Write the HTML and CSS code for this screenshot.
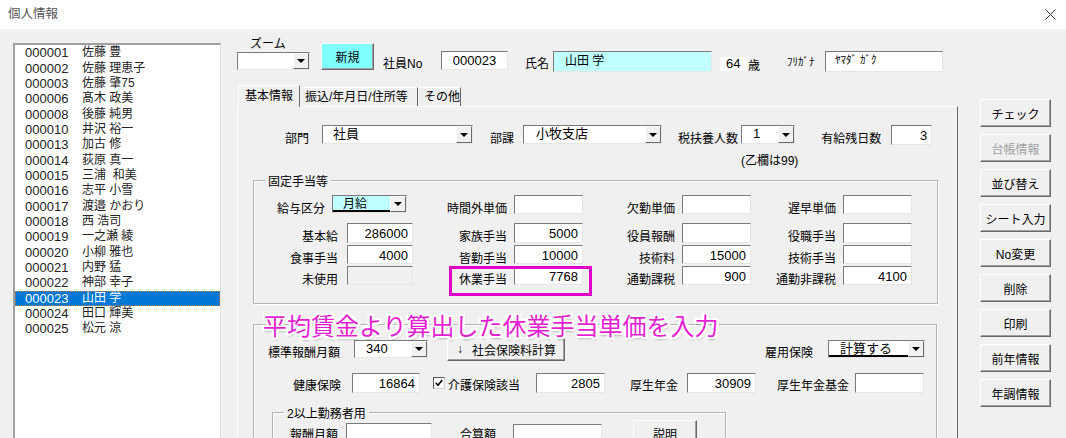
FILE: index.html
```html
<!DOCTYPE html>
<html lang="ja">
<head>
<meta charset="utf-8">
<title>個人情報</title>
<link rel="stylesheet" href="styles.css">
</head>
<body>
<div class="window">
  <div class="titlebar">
    <span class="title">個人情報</span>
    <svg class="close" width="11" height="11" viewBox="0 0 11 11"><path d="M0.5 0.5 L10.5 10.5 M10.5 0.5 L0.5 10.5" stroke="#333" stroke-width="1" fill="none"/></svg>
  </div>
  <div class="client">
    <ul class="list">
      <li><span class="code">000001</span><span class="nm">佐藤 豊</span></li>
      <li><span class="code">000002</span><span class="nm">佐藤 理恵子</span></li>
      <li><span class="code">000003</span><span class="nm">佐藤 肇75</span></li>
      <li><span class="code">000006</span><span class="nm">髙木 政美</span></li>
      <li><span class="code">000008</span><span class="nm">後藤 純男</span></li>
      <li><span class="code">000010</span><span class="nm">井沢 裕一</span></li>
      <li><span class="code">000013</span><span class="nm">加古 修</span></li>
      <li><span class="code">000014</span><span class="nm">荻原 真一</span></li>
      <li><span class="code">000015</span><span class="nm">三浦&nbsp; 和美</span></li>
      <li><span class="code">000016</span><span class="nm">志平 小雪</span></li>
      <li><span class="code">000017</span><span class="nm">渡邉 かおり</span></li>
      <li><span class="code">000018</span><span class="nm">西 浩司</span></li>
      <li><span class="code">000019</span><span class="nm">一之瀬 綾</span></li>
      <li><span class="code">000020</span><span class="nm">小柳 雅也</span></li>
      <li><span class="code">000021</span><span class="nm">内野 猛</span></li>
      <li><span class="code">000022</span><span class="nm">神部 幸子</span></li>
      <li class="sel"><span class="code">000023</span><span class="nm">山田 学</span></li>
      <li><span class="code">000024</span><span class="nm">田口 輝美</span></li>
      <li><span class="code">000025</span><span class="nm">松元 涼</span></li>
    </ul>

    <div class="main">
      <div class="header">
        <div class="zoomgrp">
          <div class="zoomlbl">ズーム</div>
          <div class="combo w73 h18"><span class="v"></span><span class="dd"></span></div>
        </div>
        <div class="btn btn-new">新規</div>
        <span class="hlbl l-no">社員No</span>
        <span class="tb hbox w67 center">000023</span>
        <span class="hlbl l-name">氏名</span>
        <span class="tb hbox namebox">山田 学</span>
        <span class="agebox">64</span>
        <span class="hlbl l-age">歳</span>
        <span class="hlbl l-kana">ﾌﾘｶﾞﾅ</span>
        <span class="tb hbox kanabox">ﾔﾏﾀﾞ ｶﾞｸ</span>
      </div>

      <div class="tabs">
        <span class="tab active t1">基本情報</span>
        <span class="tab t2">振込/年月日/住所等</span>
        <span class="tab t3">その他</span>
      </div>

      <div class="page">
        <div class="row-dept">
          <span class="lbl l-bumon">部門</span>
          <div class="combo w151 h19"><span class="v pl10">社員</span><span class="dd"></span></div>
          <span class="lbl l-buka">部課</span>
          <div class="combo w139 h19"><span class="v pl12">小牧支店</span><span class="dd"></span></div>
          <span class="lbl l-fuyo">税扶養人数</span>
          <div class="fuyo-col">
            <div class="combo w54 h19"><span class="v pl11">1</span><span class="dd"></span></div>
            <div class="note">(乙欄は99)</div>
          </div>
          <span class="lbl l-yukyu">有給残日数</span>
          <span class="tb num w41 h20">3</span>
        </div>

        <div class="grp g1">
          <div class="grp-title">固定手当等</div>
          <div class="g1-grid">
            <div class="cellA1">
              <span class="lbl">給与区分</span>
              <div class="combo w75 h18 cyan"><span class="v ul pl10">月給</span><span class="dd"></span></div>
            </div>
            <span class="gl lb">時間外単価</span><span class="tb"></span>
            <span class="gl lc">欠勤単価</span><span class="tb"></span>
            <span class="gl ld">遅早単価</span><span class="tb"></span>

            <span class="gl la">基本給</span><span class="tb num h20">286000</span>
            <span class="gl lb">家族手当</span><span class="tb num h20">5000</span>
            <span class="gl lc">役員報酬</span><span class="tb h20"></span>
            <span class="gl ld">役職手当</span><span class="tb h20"></span>

            <span class="gl la">食事手当</span><span class="tb num">4000</span>
            <span class="gl lb">皆勤手当</span><span class="tb num">10000</span>
            <span class="gl lc">技術料</span><span class="tb num">15000</span>
            <span class="gl ld">技術手当</span><span class="tb"></span>

            <span class="gl la">未使用</span><span class="tb disabled"></span>
            <span class="gl lb">休業手当</span><span class="tb num">7768</span>
            <span class="gl lc">通勤課税</span><span class="tb num">900</span>
            <span class="gl ld">通勤非課税</span><span class="tb num">4100</span>
          </div>
        </div>

        <div class="grp g2">
          <div class="grp-gap"></div>
          <div class="g2-row1">
            <span class="lbl l-hyojun">標準報酬月額</span>
            <div class="combo w74 h18 mt3"><span class="v pl11">340</span><span class="dd"></span></div>
            <div class="btn btn-calc"><span class="arrow">↓</span>社会保険料計算</div>
            <span class="lbl l-koyo">雇用保険</span>
            <div class="combo w97 h18 mt3"><span class="v ul pl11">計算する</span><span class="dd"></span></div>
          </div>
          <div class="g2-row2">
            <span class="lbl l-kenko">健康保険</span>
            <span class="tb num w68 h20">16864</span>
            <span class="chk"><svg width="10" height="10" viewBox="0 0 10 10"><path d="M1.8 4.8 L4 7.3 L8.2 2" fill="none" stroke="#000" stroke-width="1.6"/></svg></span>
            <span class="lbl l-kaigo">介護保険該当</span>
            <span class="tb num w69 h20">2805</span>
            <span class="lbl l-kosei">厚生年金</span>
            <span class="tb num w69 h20">30909</span>
            <span class="lbl l-kikin">厚生年金基金</span>
            <span class="tb w69 h20"></span>
          </div>
          <div class="grp g3">
            <div class="grp-title">2以上勤務者用</div>
            <div class="g3-row">
              <span class="lbl l-hoshu">報酬月額</span>
              <span class="tb w86 h20 mt3"></span>
              <span class="lbl l-gassan">合算額</span>
              <span class="tb w89 h20 mt4"></span>
              <div class="btn btn-setsumei">説明</div>
            </div>
          </div>
        </div>
      </div>
    </div>

    <div class="buttons">
      <div class="btn sbtn">チェック</div>
      <div class="btn sbtn disabled-text">台帳情報</div>
      <div class="btn sbtn">並び替え</div>
      <div class="btn sbtn">シート入力</div>
      <div class="btn sbtn">No変更</div>
      <div class="btn sbtn">削除</div>
      <div class="btn sbtn">印刷</div>
      <div class="btn sbtn">前年情報</div>
      <div class="btn sbtn">年調情報</div>
    </div>
  </div>

  <div class="callout-box"></div>
  <div class="callout-text">平均賃金より算出した休業手当単価を入力</div>
</div>
</body>
</html>
```

FILE: styles.css
```css
* { box-sizing: border-box; margin: 0; padding: 0; }
html, body { width: 1066px; height: 438px; overflow: hidden; }
body {
  font-family: "Liberation Sans", "Noto Sans CJK JP", sans-serif;
  font-size: 12px;
  color: #000;
  background: #f0f0f0;
}
.window { position: relative; width: 1066px; height: 438px; overflow: hidden; background: #f0f0f0; }

/* title bar */
.titlebar {
  height: 29px; background: #fff;
  display: flex; align-items: center; justify-content: space-between;
  padding: 0 10px 2px 8px;
}
.title { font-size: 12.5px; line-height: 16px; color: #555; }
.close { display: block; margin-top: 1px; }

.client { display: flex; align-items: flex-start; height: 409px; }

/* list */
.list {
  list-style: none; flex: none;
  margin: 14px 0 0 13px; width: 208px; height: 420px;
  background: #fff;
  border-top: 2px solid #a0a0a0; border-left: 2px solid #a0a0a0;
  border-right: 1px solid #e3e3e3;
  padding-top: 0.3px;
}
.list li { display: flex; height: 15.33px; line-height: 15.33px; padding-left: 10px; color: #222; white-space: nowrap; }
.code { width: 57px; font-size: 13px; }
.nm { font-size: 12px; }
.list li.sel { background: #0078d7; color: #fff; outline: 1px dotted #c07838; outline-offset: -1px; }

/* main column */
.main { flex: none; margin-left: 16px; width: 721px; }
.header { display: flex; align-items: flex-start; height: 56px; }
.zoomgrp { margin-top: 8px; }
.zoomlbl { padding-left: 13px; line-height: 15px; height: 15px; font-size: 12px; }
.hlbl { margin-top: 22px; padding-top: 4px; line-height: 19px; white-space: nowrap; }
.l-no { margin-left: 9px; width: 58px; }
.l-name { margin-left: 17px; width: 28px; }
.l-age { width: 39px; padding-top: 6px; }
.l-kana { width: 38px; padding-top: 2px; font-size: 11px; }

/* tabs */
.tabs { display: flex; align-items: flex-end; height: 21px; padding-left: 1px; }
.tab { height: 19px; line-height: 19px; border-right: 1px solid #696969; border-top: 1px solid #fff; white-space: nowrap; font-size: 12px; }
.tab.active { height: 22px; line-height: 21px; border-left: 1px solid #fff; margin-bottom: -1px; position: relative; z-index: 1; background: #f0f0f0; }
.t1 { width: 62px; padding-left: 6px; }
.t2 { width: 118px; padding-left: 5px; }
.t3 { width: 43px; padding-left: 6px; }

.page {
  border-top: 1px solid #fff; border-left: 1px solid #fff; border-right: 1px solid #696969;
  height: 420px; padding: 18px 0 0 15px;
}

/* generic controls */
.lbl { padding-top: 5px; line-height: 19px; white-space: nowrap; flex: none; }
.tb {
  display: block; flex: none;
  height: 19px; background: #fff;
  border: 1px solid; border-color: #7a7a7a #e6e6e6 #e6e6e6 #7a7a7a;
  font-size: 13px; line-height: 17px; white-space: nowrap; overflow: hidden;
}
.tb.num { text-align: right; padding: 3px 4px 0 0; line-height: 14px; }
.tb.center { text-align: center; }
.tb.disabled { background: #f0f0f0; }
.combo {
  display: flex; flex: none; background: #fff;
  border: 1px solid; border-color: #7a7a7a #e6e6e6 #e6e6e6 #7a7a7a;
}
.combo .v { flex: 1; font-size: 13px; line-height: 16px; white-space: nowrap; overflow: hidden; }
.combo .v.ul { border-bottom: 2px solid #000; }
.combo.cyan .v { background: #c0ffff; font-size: 12px; }
.combo .dd {
  width: 16px; flex: none; background: #f0f0f0;
  border: 1px solid; border-color: #fff #696969 #696969 #fff;
  display: flex; align-items: center; justify-content: center;
}
.combo .dd::after {
  content: ""; display: block; width: 0; height: 0;
  border-left: 4px solid transparent; border-right: 4px solid transparent; border-top: 4px solid #000;
}
.btn {
  display: flex; align-items: center; justify-content: center; flex: none;
  background: #f0f0f0; font-size: 12px; white-space: nowrap;
  border: 1px solid; border-color: #fff #696969 #696969 #fff;
  box-shadow: inset -1px -1px 0 #a0a0a0;
}
.pl10 { padding-left: 10px; } .pl11 { padding-left: 11px; } .pl12 { padding-left: 12px; }
.mt3 { margin-top: 3px; } .mt4 { margin-top: 4px; }
.w41 { width: 41px; } .w54 { width: 54px; } .w67 { width: 67px; } .w68 { width: 68px; } .w69 { width: 69px; }
.w73 { width: 73px; } .w74 { width: 74px; } .w75 { width: 75px; } .w86 { width: 86px; } .w89 { width: 89px; }
.w97 { width: 97px; } .w139 { width: 139px; } .w151 { width: 151px; }
.h18 { height: 18px; } .h19 { height: 19px; } .h20 { height: 20px; }

/* header specifics (after generics so they win) */
.btn.btn-new { margin: 14px 0 0 11px; width: 53px; height: 27px; background: #80ffff; }
.tb.hbox { margin-top: 22px; }
.tb.namebox { width: 159px; height: 21px; line-height: 19px; background: #c0ffff; padding-left: 11px; font-size: 12px; }
.tb.kanabox { width: 118px; height: 21px; line-height: 17px; padding-left: 9px; font-size: 11px; }
.agebox { flex: none; margin: 28px 0 0 8px; width: 28px; height: 14px; line-height: 14px; background: #fff; padding-left: 6px; font-size: 13px; }

/* dept row */
.row-dept { display: flex; align-items: flex-start; }
.l-bumon { margin-left: 32px; width: 37px; }
.l-buka { margin-left: 17px; width: 33px; }
.l-fuyo { margin-left: 16px; width: 63px; }
.l-yukyu { margin-left: 23px; width: 70px; }
.fuyo-col { flex: none; }
.note { margin-top: 10px; line-height: 14px; white-space: nowrap; }

/* groups */
.grp {
  border: 1px solid #b4b4b4;
  box-shadow: inset 1px 1px 0 #fff, 1px 1px 0 #fff;
}
.grp-title {
  width: fit-content; margin: -6px 0 0 11px; padding: 0 3px;
  background: #f0f0f0; line-height: 14px; white-space: nowrap;
}
.grp-gap { height: 8px; }
.g1 { margin-top: 12px; width: 685px; padding-bottom: 18px; }
.g1-grid {
  margin-top: 6px;
  display: grid;
  grid-template-columns: 93px 66px 101px 69px 99px 69px 92px 69px;
  grid-template-rows: 28px 22px 21px 19px;
  align-items: start;
}
.cellA1 { grid-column: span 2; display: flex; justify-content: flex-end; padding-right: 6px; }
.cellA1 .combo { margin-left: 7px; }
.gl { text-align: right; padding-top: 5px; line-height: 19px; white-space: nowrap; }
.la { padding-right: 9px; } .lb { padding-right: 7px; } .lc { padding-right: 7px; } .ld { padding-right: 7px; }

.g2 { margin-top: 20px; width: 684px; height: 200px; }
.g2-row1 { display: flex; align-items: flex-start; margin-top: 4px; }
.l-hyojun { margin: 3px 0 0 14px; width: 86px; padding-top: 4px; }
.btn.btn-calc { margin-left: 19px; width: 118px; height: 24px; justify-content: flex-start; padding-left: 9px; }
.btn-calc .arrow { margin-right: 9px; }
.l-koyo { margin: 3px 0 0 200px; width: 63px; padding-top: 4px; }
.g2-row2 { display: flex; align-items: flex-start; margin-top: 10px; }
.g2-row2 .lbl { padding-top: 4px; }
.l-kenko { margin-left: 39px; width: 59px; }
.chk {
  display: flex; align-items: center; justify-content: center; flex: none;
  margin: 4px 0 0 13px; width: 12px; height: 12px; background: #fff;
  border: 1px solid; border-color: #555 #d0d0d0 #d0d0d0 #555;
}
.l-kaigo { margin-left: 3px; width: 88px; }
.l-kosei { margin-left: 25px; width: 57px; }
.l-kikin { margin-left: 21px; width: 78px; }

.g3 { margin: 16px 0 0 18px; width: 454px; height: 60px; }
.g3-row { display: flex; align-items: flex-start; margin-top: -1px; }
.l-hoshu { margin-left: 17px; width: 56px; padding-top: 6px; }
.l-gassan { margin-left: 28px; width: 53px; padding-top: 6px; }
.btn.btn-setsumei { margin-left: 31px; width: 64px; height: 26px; }

/* right buttons */
.buttons { flex: none; margin: 70px 0 0 22px; width: 71px; display: flex; flex-direction: column; gap: 7px; }
.sbtn { height: 28px; }
.disabled-text { color: #a0a0a0; }

/* annotation overlay */
.callout-box {
  position: absolute; left: 449px; top: 266px; width: 143px; height: 30px;
  border: 3px solid #e000c8;
}
.callout-text {
  position: absolute; left: 263px; top: 310px;
  font-family: "Noto Sans CJK JP", sans-serif;
  font-size: 24px; line-height: 30px; white-space: nowrap;
  color: #e61ed2;
  text-shadow:
    2px 0 0 #fff, -2px 0 0 #fff, 0 2px 0 #fff, 0 -2px 0 #fff,
    2px 2px 0 #fff, -2px 2px 0 #fff, 2px -2px 0 #fff, -2px -2px 0 #fff,
    1px 2px 0 #fff, -1px 2px 0 #fff, 2px 1px 0 #fff, -2px 1px 0 #fff,
    1px -2px 0 #fff, -1px -2px 0 #fff, 2px -1px 0 #fff, -2px -1px 0 #fff,
    1px 3px 2px rgba(0,0,0,0.25);
}
```
